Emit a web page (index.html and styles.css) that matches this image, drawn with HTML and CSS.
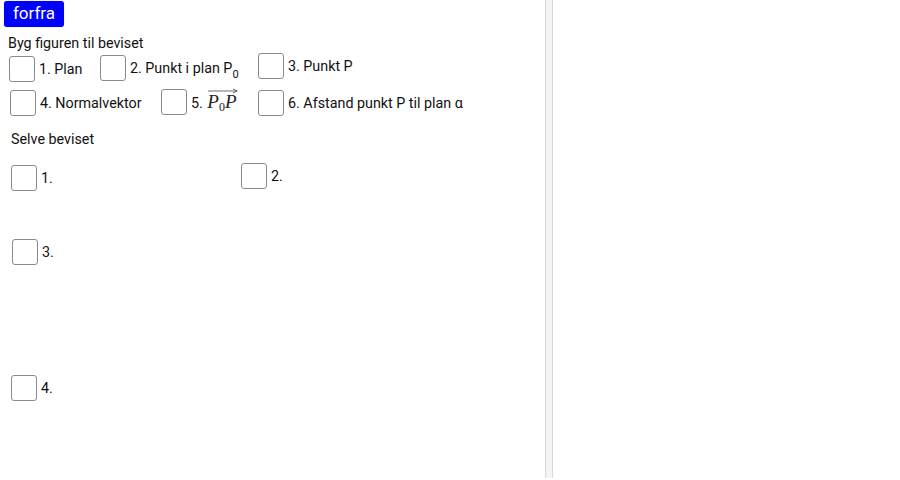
FILE: index.html
```html
<!DOCTYPE html>
<html lang="da">
<head>
<meta charset="utf-8">
<title>Bevis</title>
<link rel="stylesheet" href="styles.css">
</head>
<body>
<div class="applet">
  <div class="graphics">
    <button class="btn-reset">forfra</button>
    <div class="title t-build">Byg figuren til beviset</div>

    <label class="cb c1"><span class="box"></span><span class="lbl">1. Plan</span></label>
    <label class="cb c2"><span class="box"></span><span class="lbl">2. Punkt i plan P<sub>0</sub></span></label>
    <label class="cb c3"><span class="box"></span><span class="lbl">3. Punkt P</span></label>
    <label class="cb c4"><span class="box"></span><span class="lbl">4. Normalvektor</span></label>
    <label class="cb c5"><span class="box"></span><span class="lbl">5. <span class="vec"><svg class="arrow" viewBox="0 0 30 6" preserveAspectRatio="none"><path d="M1 3H28.5M25 1L29 3L25 5" fill="none" stroke="#333" stroke-width="0.7"/></svg><i>P</i><sub>0</sub><i>P</i></span></span></label>
    <label class="cb c6"><span class="box"></span><span class="lbl">6. Afstand punkt P til plan α</span></label>

    <div class="title t-proof">Selve beviset</div>

    <label class="cb p1"><span class="box"></span><span class="lbl">1.</span></label>
    <label class="cb p2"><span class="box"></span><span class="lbl">2.</span></label>
    <label class="cb p3"><span class="box"></span><span class="lbl">3.</span></label>
    <label class="cb p4"><span class="box"></span><span class="lbl">4.</span></label>
  </div>
  <div class="divider"></div>
  <div class="side"></div>
</div>
</body>
</html>
```
FILE: styles.css
```css
html, body {
  margin: 0;
  padding: 0;
  background: #fff;
}
body {
  font-family: Roboto, "Liberation Sans", sans-serif;
  color: #111;
  width: 900px;
  height: 480px;
  overflow: hidden;
}
.applet {
  display: flex;
  height: 478px;
}
.graphics {
  position: relative;
  width: 545px;
  height: 100%;
  background: #fff;
}
.divider {
  width: 6px;
  height: 100%;
  background: #f4f4f4;
  border-left: 1px solid #d8d8d8;
  border-right: 1px solid #d8d8d8;
}
.side {
  flex: 1;
  background: #fff;
}

/* free-canvas objects of the graphics view */
.btn-reset {
  position: absolute;
  left: 4px;
  top: 1px;
  width: 60px;
  height: 26px;
  padding: 0 0 2px;
  background: #0000ff;
  color: #fff;
  border: none;
  border-radius: 3px;
  font-family: Roboto, "Liberation Sans", sans-serif;
  font-size: 17px;
  line-height: 24px;
  box-shadow: 0 0 1px rgba(0,0,0,0.4);
}
.title {
  position: absolute;
  font-size: 14.3px;
  line-height: 16px;
}
.t-build { left: 8px; top: 35px; }
.t-proof { left: 11px; top: 131px; }

.cb {
  position: absolute;
  display: flex;
  align-items: center;
  gap: 4px;
  font-size: 14.3px;
  line-height: 16px;
}
.box {
  width: 24px;
  height: 24px;
  border: 1.5px solid #8a8a8a;
  border-radius: 3px;
  background: #fff;
  flex: none;
}
.lbl { white-space: nowrap; }
.lbl sub {
  font-size: 11px;
  vertical-align: -5px;
  line-height: 0;
}

.c1 { left: 9px; top: 56px; }
.c2 { left: 100px; top: 55px; }
.c3 { left: 258px; top: 53px; }
.c4 { left: 10px; top: 90px; }
.c5 { left: 161px; top: 89px; }
.c6 { left: 258px; top: 90px; }
.p1 { left: 11px; top: 165px; }
.p2 { left: 241px; top: 163px; }
.p3 { left: 12px; top: 239px; }
.p4 { left: 11px; top: 375px; }

.vec {
  position: relative;
  display: inline-block;
  margin-left: 1px;
  font-family: "Liberation Serif", "DejaVu Serif", serif;
  font-size: 19px;
  line-height: 18px;
  color: #222;
}
.vec i { font-style: italic; }
.vec sub {
  font-size: 12px;
  vertical-align: -3px;
  line-height: 0;
  font-style: normal;
}
.arrow {
  position: absolute;
  left: 0;
  top: -5px;
  width: calc(100% + 2px);
  height: 6px;
}
```
